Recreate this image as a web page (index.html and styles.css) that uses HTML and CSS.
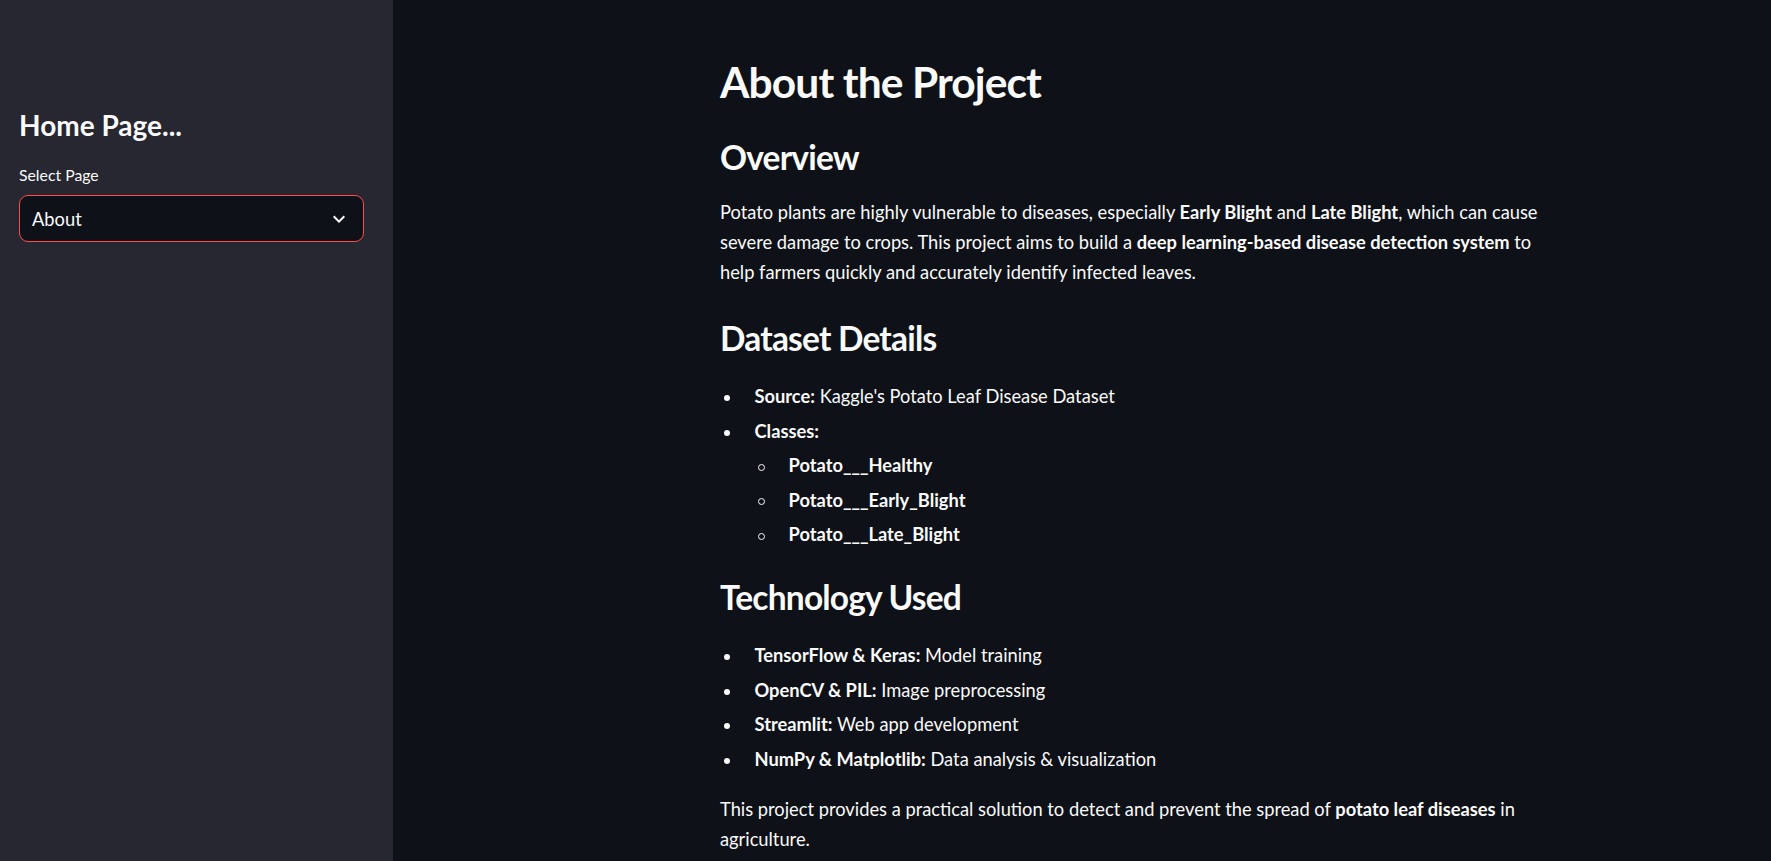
FILE: index.html
```html
<!DOCTYPE html>
<html lang="en">
<head>
<meta charset="utf-8">
<title>About the Project</title>
<link rel="stylesheet" href="styles.css">
</head>
<body>
<div class="app">
  <aside class="sidebar">
    <h1 class="side-title">Home Page...</h1>
    <div class="select-label">Select Page</div>
    <div class="select">
      <span class="select-value">About</span>
      <svg class="chevron" viewBox="0 0 24 24" width="24" height="24" aria-hidden="true"><path d="M7.41 8.59L12 13.17l4.59-4.58L18 10l-6 6-6-6 1.41-1.41z" fill="#fafafa"/></svg>
    </div>
  </aside>
  <main class="main">
    <div class="content">
      <h1 class="title">About the Project</h1>
      <h2 class="section">Overview</h2>
      <p class="para">Potato plants are highly vulnerable to diseases, especially <b>Early Blight</b> and <b>Late Blight</b>, which can cause severe damage to crops. This project aims to build a <b>deep learning-based disease detection system</b> to help farmers quickly and accurately identify infected leaves.</p>
      <h2 class="section">Dataset Details</h2>
      <ul class="list">
        <li><b>Source:</b> Kaggle's Potato Leaf Disease Dataset</li>
        <li><b>Classes:</b>
          <ul class="sublist">
            <li><b>Potato___Healthy</b></li>
            <li><b>Potato___Early_Blight</b></li>
            <li><b>Potato___Late_Blight</b></li>
          </ul>
        </li>
      </ul>
      <h2 class="section">Technology Used</h2>
      <ul class="list">
        <li><b>TensorFlow &amp; Keras:</b> Model training</li>
        <li><b>OpenCV &amp; PIL:</b> Image preprocessing</li>
        <li><b>Streamlit:</b> Web app development</li>
        <li><b>NumPy &amp; Matplotlib:</b> Data analysis &amp; visualization</li>
      </ul>
      <p class="para para-last">This project provides a practical solution to detect and prevent the spread of <b>potato leaf diseases</b> in agriculture.</p>
    </div>
  </main>
</div>
</body>
</html>
```

FILE: styles.css
```css
html, body {
  margin: 0;
  padding: 0;
  height: 100%;
  overflow: hidden;
  background: #0e1117;
}

body {
  font-family: "Lato", "Liberation Sans", sans-serif;
  color: #fafafa;
}

.app {
  display: flex;
  height: 100vh;
}

.sidebar {
  width: 393px;
  flex: 0 0 393px;
  background: #262730;
  box-sizing: border-box;
  padding: 108px 29px 0 19px;
  display: flex;
  flex-direction: column;
}

.side-title {
  margin: 0;
  font-size: 28px;
  line-height: 34px;
  font-weight: 700;
  color: #fafafa;
}

.select-label {
  margin-top: 23px;
  font-size: 15.8px;
  line-height: 20px;
  color: #fafafa;
}

.select {
  margin-top: 10px;
  height: 47px;
  box-sizing: border-box;
  border: 1px solid #ff4b4b;
  border-radius: 9px;
  background: #0e1117;
  display: flex;
  align-items: center;
  justify-content: space-between;
  padding: 0 12px 0 12px;
}

.select-value {
  font-size: 18.3px;
  color: #fafafa;
}

.chevron {
  display: block;
}

.main {
  flex: 1;
  padding: 51px 0 0 327px;
  box-sizing: border-box;
}

.content {
  width: 830px;
}

.title {
  margin: 0;
  font-size: 42.5px;
  letter-spacing: -0.9px;
  line-height: 62px;
  font-weight: 700;
}

.section {
  margin: 0;
  font-size: 33.5px;
  letter-spacing: -0.8px;
  line-height: 50px;
  font-weight: 700;
}

.title + .section {
  margin-top: 19px;
}

.para {
  margin: 15px 0 0;
  font-size: 18.3px;
  line-height: 30px;
}

.para + .section {
  margin-top: 26px;
}

.list {
  margin: 18px 0 0;
  padding-left: 34.5px;
  font-size: 18.3px;
  line-height: 30px;
  list-style: none;
}

.list + .section {
  margin-top: 23px;
}

.list li {
  margin-top: 4.5px;
}

.list > li:first-child {
  margin-top: 0;
}

.list > li::before {
  content: "";
  display: inline-block;
  width: 6px;
  height: 6px;
  border-radius: 50%;
  background: #fafafa;
  margin-left: -31px;
  margin-right: 25px;
  vertical-align: middle;
}

.sublist {
  margin: 0;
  padding-left: 34px;
  list-style: none;
}

.sublist li::before {
  content: "";
  display: inline-block;
  box-sizing: border-box;
  width: 7px;
  height: 7px;
  border-radius: 50%;
  border: 1px solid #fafafa;
  margin-left: -31px;
  margin-right: 24px;
  vertical-align: middle;
}

.para-last {
  margin-top: 20px;
}

b {
  font-weight: 700;
}
```
